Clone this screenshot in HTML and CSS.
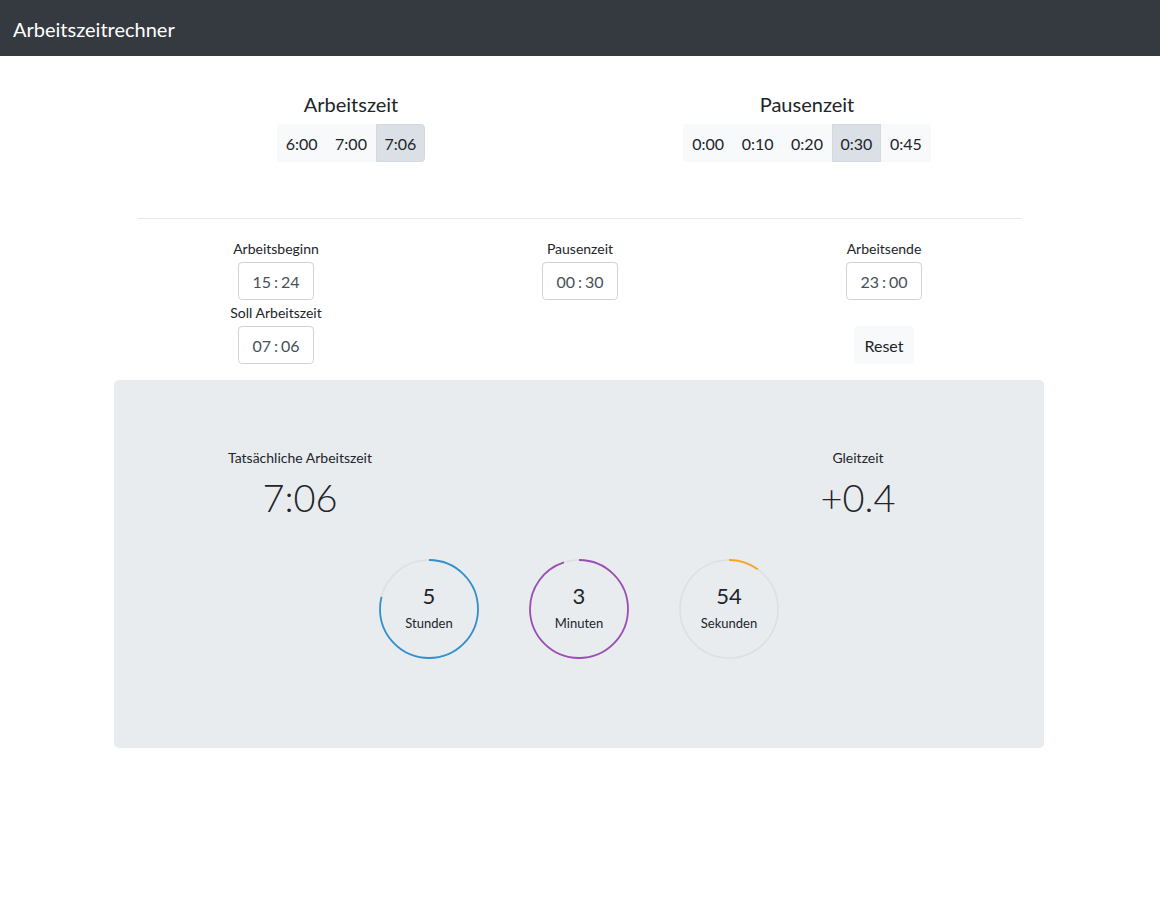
FILE: index.html
```html
<!DOCTYPE html>
<html lang="de">
<head>
<meta charset="utf-8">
<title>Arbeitszeitrechner</title>
<link rel="stylesheet" href="styles.css">
</head>
<body>
<nav class="navbar"><span class="brand">Arbeitszeitrechner</span></nav>
<main class="container">
  <section class="presets">
    <div class="preset">
      <h5 class="preset-title">Arbeitszeit</h5>
      <div class="btn-group">
        <button class="btn">6:00</button>
        <button class="btn">7:00</button>
        <button class="btn active">7:06</button>
      </div>
    </div>
    <div class="preset">
      <h5 class="preset-title">Pausenzeit</h5>
      <div class="btn-group">
        <button class="btn">0:00</button>
        <button class="btn">0:10</button>
        <button class="btn">0:20</button>
        <button class="btn active">0:30</button>
        <button class="btn">0:45</button>
      </div>
    </div>
  </section>
  <hr class="divider">
  <section class="inputs">
    <div class="field-col">
      <label class="field-label">Arbeitsbeginn</label>
      <div class="time-input"><span>15</span><span class="sep">:</span><span>24</span></div>
      <label class="field-label second">Soll Arbeitszeit</label>
      <div class="time-input"><span>07</span><span class="sep">:</span><span>06</span></div>
    </div>
    <div class="field-col">
      <label class="field-label">Pausenzeit</label>
      <div class="time-input"><span>00</span><span class="sep">:</span><span>30</span></div>
    </div>
    <div class="field-col">
      <label class="field-label">Arbeitsende</label>
      <div class="time-input"><span>23</span><span class="sep">:</span><span>00</span></div>
      <button class="btn reset">Reset</button>
    </div>
  </section>
  <section class="jumbotron">
    <div class="results">
      <div class="result">
        <div class="result-label">Tatsächliche Arbeitszeit</div>
        <div class="result-value">7:06</div>
      </div>
      <div class="result">
        <div class="result-label">Gleitzeit</div>
        <div class="result-value">+0.4</div>
      </div>
    </div>
    <div class="circles">
      <div class="ring">
        <svg class="ring-svg" viewBox="0 0 100 100" width="100" height="100">
          <circle class="track" cx="50" cy="50" r="49"/>
          <circle class="arc arc-blue" cx="50" cy="50" r="49" pathLength="100" stroke-dasharray="79 100"/>
        </svg>
        <div class="ring-text"><span class="ring-num">5</span><span class="ring-unit">Stunden</span></div>
      </div>
      <div class="ring">
        <svg class="ring-svg" viewBox="0 0 100 100" width="100" height="100">
          <circle class="track" cx="50" cy="50" r="49"/>
          <circle class="arc arc-purple" cx="50" cy="50" r="49" pathLength="100" stroke-dasharray="95 100"/>
        </svg>
        <div class="ring-text"><span class="ring-num">3</span><span class="ring-unit">Minuten</span></div>
      </div>
      <div class="ring">
        <svg class="ring-svg" viewBox="0 0 100 100" width="100" height="100">
          <circle class="track" cx="50" cy="50" r="49"/>
          <circle class="arc arc-orange" cx="50" cy="50" r="49" pathLength="100" stroke-dasharray="10 100"/>
        </svg>
        <div class="ring-text"><span class="ring-num">54</span><span class="ring-unit">Sekunden</span></div>
      </div>
    </div>
  </section>
</main>
</body>
</html>
```

FILE: styles.css
```css
* { box-sizing: border-box; }
html, body { margin: 0; padding: 0; }
body {
  font-family: Lato, "Noto Sans", sans-serif;
  font-size: 16px;
  color: #212529;
  background: #fff;
  width: 1160px;
  height: 911px;
}
.navbar {
  height: 56px;
  background: #343a40;
  display: flex;
  align-items: center;
  padding: 2px 13px 0;
}
.brand {
  color: #fff;
  font-size: 20px;
  line-height: 30px;
}
.container {
  width: 930px;
  margin: 0 auto;
  display: flex;
  flex-direction: column;
  align-items: center;
}
.presets {
  margin-top: 36px;
  display: flex;
  justify-content: center;
  gap: 156px;
  width: 100%;
  padding-right: 2px;
}
.preset {
  width: 300px;
  display: flex;
  flex-direction: column;
  align-items: center;
}
.preset-title {
  margin: 0 0 8px;
  font-size: 20px;
  font-weight: 400;
  line-height: 24px;
}
.btn-group {
  display: flex;
  border-radius: 4px;
  background: #f8f9fa;
}
.btn {
  font-family: inherit;
  font-size: 16px;
  color: #212529;
  background: #f8f9fa;
  border: 1px solid #f8f9fa;
  height: 38px;
  padding: 1px 7.8px 0;
  margin: 0;
  line-height: 35px;
  cursor: pointer;
  border-radius: 0;
}
.btn-group .btn:first-child { border-radius: 4px 0 0 4px; }
.btn-group .btn:last-child { border-radius: 0 4px 4px 0; }
.btn.active {
  background: #dae0e5;
  border-color: #d3d9df;
}
.divider {
  width: 883px;
  margin: 56px 0 0;
  border: 0;
  border-top: 1px solid rgba(0,0,0,.1);
  position: relative;
  left: -1px;
}
.inputs {
  margin-top: 20px;
  display: flex;
  justify-content: center;
  gap: 104px;
  width: 100%;
}
.field-col {
  width: 200px;
  display: flex;
  flex-direction: column;
  align-items: center;
}
.field-label {
  font-size: 14px;
  line-height: 21px;
  margin-top: -1px;
  margin-bottom: 3px;
}
.field-label.second { margin-top: 2px; }
.time-input {
  width: 76px;
  height: 38px;
  border: 1px solid #ced4da;
  border-radius: 4px;
  background: #fff;
  color: #495057;
  font-size: 16px;
  display: flex;
  align-items: center;
  justify-content: center;
}
.time-input .sep { margin: 0 3px; }
.btn.reset {
  margin-top: 26px;
  border-radius: 4px;
  padding: 1px 9px 0;
}
.jumbotron {
  margin-top: 16px;
  width: 930px;
  height: 368px;
  background: #e9ecef;
  border-radius: 5px;
  padding-top: 67px;
  display: flex;
  flex-direction: column;
  align-items: center;
  position: relative;
  left: -1px;
}
.results {
  width: 100%;
  display: flex;
  justify-content: space-between;
  padding: 0 66px;
}
.result {
  width: 240px;
  display: flex;
  flex-direction: column;
  align-items: center;
}
.result-label {
  font-size: 14px;
  line-height: 21px;
}
.result-value {
  margin-top: 5px;
  font-size: 38px;
  font-weight: 300;
  line-height: 48px;
}
.circles {
  margin-top: 38px;
  display: flex;
  gap: 50px;
}
.ring {
  width: 100px;
  height: 100px;
  position: relative;
}
.ring-svg { display: block; }
.track {
  fill: none;
  stroke: #dcdfe3;
  stroke-width: 1.6;
}
.arc {
  fill: none;
  stroke-width: 1.8;
  transform: rotate(-90deg);
  transform-origin: 50px 50px;
}
.arc-blue { stroke: #3390cd; }
.arc-purple { stroke: #9b4fb5; }
.arc-orange { stroke: #f5a623; }
.ring-text {
  position: absolute;
  inset: 0;
  display: flex;
  flex-direction: column;
  align-items: center;
  justify-content: center;
  padding-bottom: 2px;
}
.ring-num {
  font-size: 22px;
  line-height: 26px;
}
.ring-unit {
  font-size: 13px;
  line-height: 20px;
  margin-top: 4px;
}
```
